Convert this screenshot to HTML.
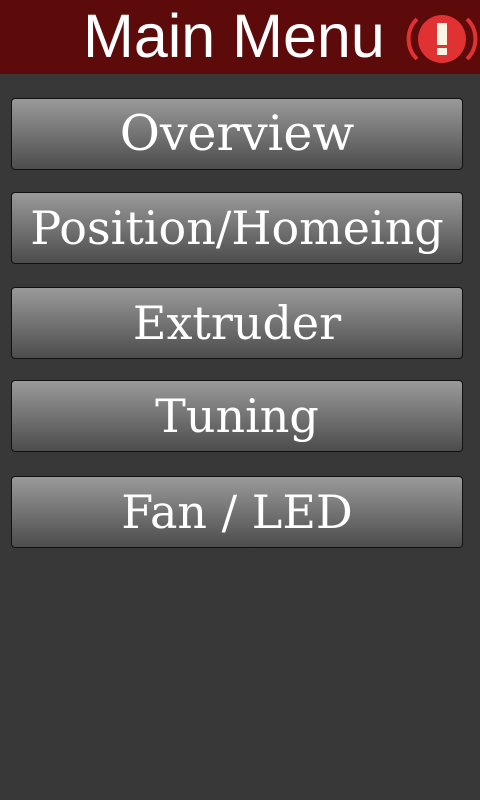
<!DOCTYPE html>
<html><head><style>
body{margin:0;width:480px;height:800px;background:#383838;overflow:hidden;position:relative}
.hdr{position:absolute;left:0;top:0;width:480px;height:74px;background:#5c0a0a}
.t{position:absolute;left:83px;top:-4px;font:61px "Liberation Sans",sans-serif;color:#fff;line-height:80px}
.b{position:absolute;left:11px;width:450px;height:70px;border:1px solid #111;border-radius:4px;background:linear-gradient(#9a9a9a,#4c4c4c);color:#fff;font:46px "DejaVu Serif",serif;text-align:center;line-height:70px;box-sizing:content-box}
</style></head><body>
<div class="hdr"><div class="t">Main Menu</div>
<svg style="position:absolute;left:405px;top:10px" width="75" height="58" viewBox="0 0 75 58">
<circle cx="37" cy="29" r="24" fill="#e03232"/>
<path d="M12 9 A28 28 0 0 0 12 49" stroke="#e03232" stroke-width="4" fill="none"/>
<path d="M62 9 A28 28 0 0 1 62 49" stroke="#e03232" stroke-width="4" fill="none"/>
<rect x="32" y="13" width="10" height="22" fill="#fdf3e3"/>
<rect x="32" y="38" width="10" height="7" fill="#fdf3e3"/>
</svg></div>
<div class="b" style="top:98px;font-size:49px">Overview</div>
<div class="b" style="top:192px">Position/Homeing</div>
<div class="b" style="top:287px">Extruder</div>
<div class="b" style="top:380px">Tuning</div>
<div class="b" style="top:476px">Fan / LED</div>
</body></html>
